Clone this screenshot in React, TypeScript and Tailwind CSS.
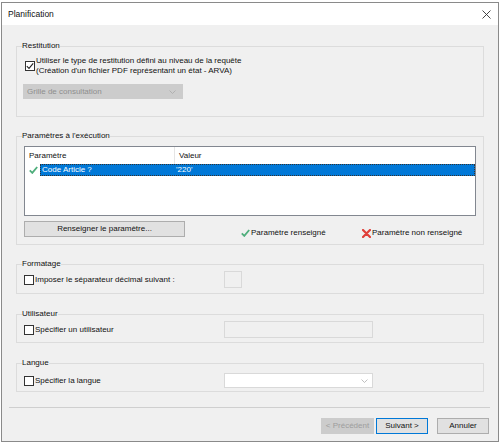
import React from "react";

const font = { fontFamily: '"Liberation Sans", Arial, sans-serif' };

function Check({ on = false }: { on?: boolean }) {
  return (
    <span className="flex h-[10px] w-[10px] shrink-0 items-center justify-center border border-[#333] bg-white">
      {on && (
        <svg width="8" height="8" viewBox="0 0 8 8">
          <path d="M0.8 4.2 L3 6.4 L7.2 1.4" fill="none" stroke="#222" strokeWidth="1.1" />
        </svg>
      )}
    </span>
  );
}

function GreenTick({ className = "" }: { className?: string }) {
  return (
    <svg width="9" height="8" viewBox="0 0 9 8" className={className}>
      <path d="M0.8 4.4 L3.3 6.9 L8.2 1" fill="none" stroke="#4fae7c" strokeWidth="1.8" />
    </svg>
  );
}

function RedCross() {
  return (
    <svg width="9" height="9" viewBox="0 0 9 9">
      <path d="M1 1 L8 8 M8 1 L1 8" stroke="#e0403a" strokeWidth="2.2" strokeLinecap="round" />
    </svg>
  );
}

function Chevron({ color }: { color: string }) {
  return (
    <svg width="7" height="4" viewBox="0 0 7 4">
      <path d="M0.5 0.5 L3.5 3.5 L6.5 0.5" fill="none" stroke={color} strokeWidth="0.8" />
    </svg>
  );
}

function Group({ title, className = "", children }: { title: string; className?: string; children: React.ReactNode }) {
  return (
    <fieldset className={`ml-[14px] w-[468px] border border-[#dcdcdc] ${className}`}>
      <legend className="ml-[5px] px-0 leading-[10px]">{title}</legend>
      {children}
    </fieldset>
  );
}

export default function App() {
  return (
    <div className="h-[443px] w-[500px] bg-white pl-[1px] pt-[2px] text-[8px] leading-[10px] text-[#111]" style={font}>
      <div className="flex h-[440px] w-[498px] flex-col border border-[#8a8a8a]">
        {/* Title bar */}
        <div className="flex h-[22px] shrink-0 items-center justify-between bg-white pl-[6px] pr-[7px]">
          <span className="text-[8.5px]">Planification</span>
          <svg width="9" height="9" viewBox="0 0 9 9">
            <path d="M0.5 0.5 L8.5 8.5 M8.5 0.5 L0.5 8.5" stroke="#333" strokeWidth="0.9" />
          </svg>
        </div>

        <div className="flex flex-1 flex-col bg-[#f0f0f0]">
          {/* Restitution */}
          <Group title="Restitution" className="mt-[16px] pb-[17px]">
            <div className="ml-[8px] mt-[5px] flex items-center gap-[1px]">
              <Check on />
              <div>
                <div>Utiliser le type de restitution défini au niveau de la requête</div>
                <div>(Création d'un fichier PDF représentant un état - ARVA)</div>
              </div>
            </div>
            <div className="ml-[6px] mt-[8px] flex h-[15px] w-[160px] items-center justify-between border border-[#cccccc] bg-[#cccccc] pl-[3px] pr-[6px] text-[#8e8e8e]">
              <span>Grille de consultation</span>
              <Chevron color="#a8a8a8" />
            </div>
          </Group>

          {/* Paramètres */}
          <Group title="Paramètres à l'exécution" className="mt-[14px] pb-[6px]">
            <div className="ml-[7px] mt-[5px] h-[70px] w-[452px] border border-[#828790] bg-white">
              <div className="flex h-[17px] items-center">
                <div className="h-full w-[150px] border-r border-[#e5e5e5] pl-[4px] pt-[4px]">Paramètre</div>
                <div className="pl-[4px]">Valeur</div>
              </div>
              <div className="flex h-[12px] items-center">
                <div className="flex w-[15px] justify-center pl-[2px]">
                  <GreenTick />
                </div>
                <div className="flex h-full flex-1 items-center border border-dotted border-[#333] bg-[#0078d7] text-white">
                  <span className="w-[135px] pl-[1px]">Code Article ?</span>
                  <span>'220'</span>
                </div>
              </div>
            </div>
            <div className="ml-[7px] mt-[5px] flex items-start">
              <div className="flex h-[16px] w-[161px] items-center justify-center border border-[#adadad] bg-[#e1e1e1]">
                Renseigner le paramètre...
              </div>
              <div className="ml-[56px] mt-[7px] flex w-[121px] items-center gap-[1px]">
                <GreenTick />
                <span>Paramètre renseigné</span>
              </div>
              <div className="mt-[7px] flex items-center gap-[1px]">
                <RedCross />
                <span>Paramètre non renseigné</span>
              </div>
            </div>
          </Group>

          {/* Formatage */}
          <Group title="Formatage" className="mt-[14px] pb-[5px]">
            <div className="ml-[7px] mt-[2px] flex items-center">
              <div className="flex w-[200px] items-center gap-[1px]">
                <Check />
                <span>Imposer le séparateur décimal suivant :</span>
              </div>
              <div className="h-[17px] w-[18px] border border-[#d9d9d9] bg-[#f0f0f0]" />
            </div>
          </Group>

          {/* Utilisateur */}
          <Group title="Utilisateur" className="mt-[15px] pb-[4px]">
            <div className="ml-[7px] mt-[2px] flex items-center">
              <div className="flex w-[200px] items-center gap-[1px]">
                <Check />
                <span>Spécifier un utilisateur</span>
              </div>
              <div className="h-[17px] w-[149px] border border-[#d9d9d9] bg-[#f0f0f0]" />
            </div>
          </Group>

          {/* Langue */}
          <Group title="Langue" className="mt-[15px] pb-[3px]">
            <div className="ml-[7px] mt-[5px] flex items-center">
              <div className="flex w-[200px] items-center gap-[1px]">
                <Check />
                <span>Spécifier la langue</span>
              </div>
              <div className="flex h-[15px] w-[149px] items-center justify-end border border-[#d9d9d9] bg-white pr-[4px]">
                <Chevron color="#b0b0b0" />
              </div>
            </div>
          </Group>

          <div className="ml-[7px] mt-[15px] h-px w-[481px] bg-[#cfcfcf]" />

          {/* Buttons */}
          <div className="ml-[319px] mt-[10px] flex">
            <div className="flex h-[16px] w-[53px] items-center justify-center border border-[#cccccc] bg-[#cccccc] text-[#9d9d9d]">
              &lt; Précédent
            </div>
            <div className="ml-[2px] flex h-[16px] w-[52px] items-center justify-center border border-[#0078d7] bg-[#e1e1e1]">
              Suivant &gt;
            </div>
            <div className="ml-[9px] flex h-[16px] w-[52px] items-center justify-center border border-[#adadad] bg-[#e1e1e1]">
              Annuler
            </div>
          </div>
        </div>
      </div>
    </div>
  );
}
